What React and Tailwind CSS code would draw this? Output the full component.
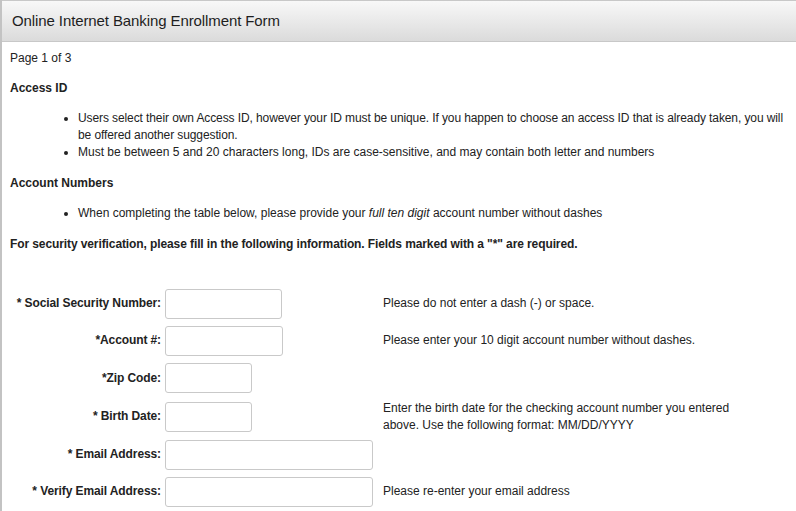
import React from 'react';

const rows = [
  { label: '* Social Security Number:', w: 'w-[117px]', h: 'h-[37px]', help: 'Please do not enter a dash (-) or space.' },
  { label: '*Account #:', w: 'w-[118px]', h: 'h-[37px]', help: 'Please enter your 10 digit account number without dashes.' },
  { label: '*Zip Code:', w: 'w-[87px]', h: 'h-[38px]', help: '' },
  {
    label: '* Birth Date:',
    w: 'w-[87px]',
    h: 'h-[39px]',
    help: 'Enter the birth date for the checking account number you entered above. Use the following format: MM/DD/YYYY',
  },
  { label: '* Email Address:', w: 'w-[208px]', h: 'h-[37px]', help: '' },
  { label: '* Verify Email Address:', w: 'w-[208px]', h: 'h-[37px]', help: 'Please re-enter your email address' },
];

export default function App() {
  return (
    <div className="min-h-screen bg-white border-l-2 border-[#c3c3c3] font-['Liberation_Sans',Arial,sans-serif] text-[#222]">
      {/* header bar */}
      <div className="h-[42px] flex items-center px-[10px] border-t border-b border-[#c8c8c8] bg-gradient-to-b from-[#f8f8f8] to-[#dbdbdb]">
        <h1 className="text-[15px] text-[#1e1e1e] tracking-[-0.1px]">Online Internet Banking Enrollment Form</h1>
      </div>

      <div className="pl-[8px] text-[12px] leading-[17px]">
        <p className="mt-[8px]">Page 1 of 3</p>

        <h2 className="mt-[13px] font-bold">Access ID</h2>
        <ul className="mt-[13px] list-disc pl-[68px]">
          <li className="tracking-[-0.1px]">
            Users select their own Access ID, however your ID must be unique. If you happen to choose an access ID that is
            already taken, you will be offered another suggestion.
          </li>
          <li>Must be between 5 and 20 characters long, IDs are case-sensitive, and may contain both letter and numbers</li>
        </ul>

        <h2 className="mt-[14px] font-bold">Account Numbers</h2>
        <ul className="mt-[13px] list-disc pl-[68px]">
          <li>
            When completing the table below, please provide your <i>full ten digit</i> account number without dashes
          </li>
        </ul>

        <p className="mt-[14px] font-bold tracking-[-0.1px]">
          For security verification, please fill in the following information. Fields marked with a "*" are required.
        </p>

        {/* form table */}
        <div className="mt-[32px] flex flex-col">
          {rows.map((r) => (
            <div key={r.label} className={`flex items-center ${r.h}`}>
              <label className="w-[155px] text-right font-bold pr-[4px] shrink-0 tracking-[-0.1px]">{r.label}</label>
              <div className="w-[218px] shrink-0">
                <input
                  type="text"
                  className={`${r.w} h-[30px] border border-[#c9c9c9] rounded-[3px] bg-white px-1 outline-none`}
                />
              </div>
              <div className="w-[370px]">{r.help}</div>
            </div>
          ))}
        </div>
      </div>
    </div>
  );
}
